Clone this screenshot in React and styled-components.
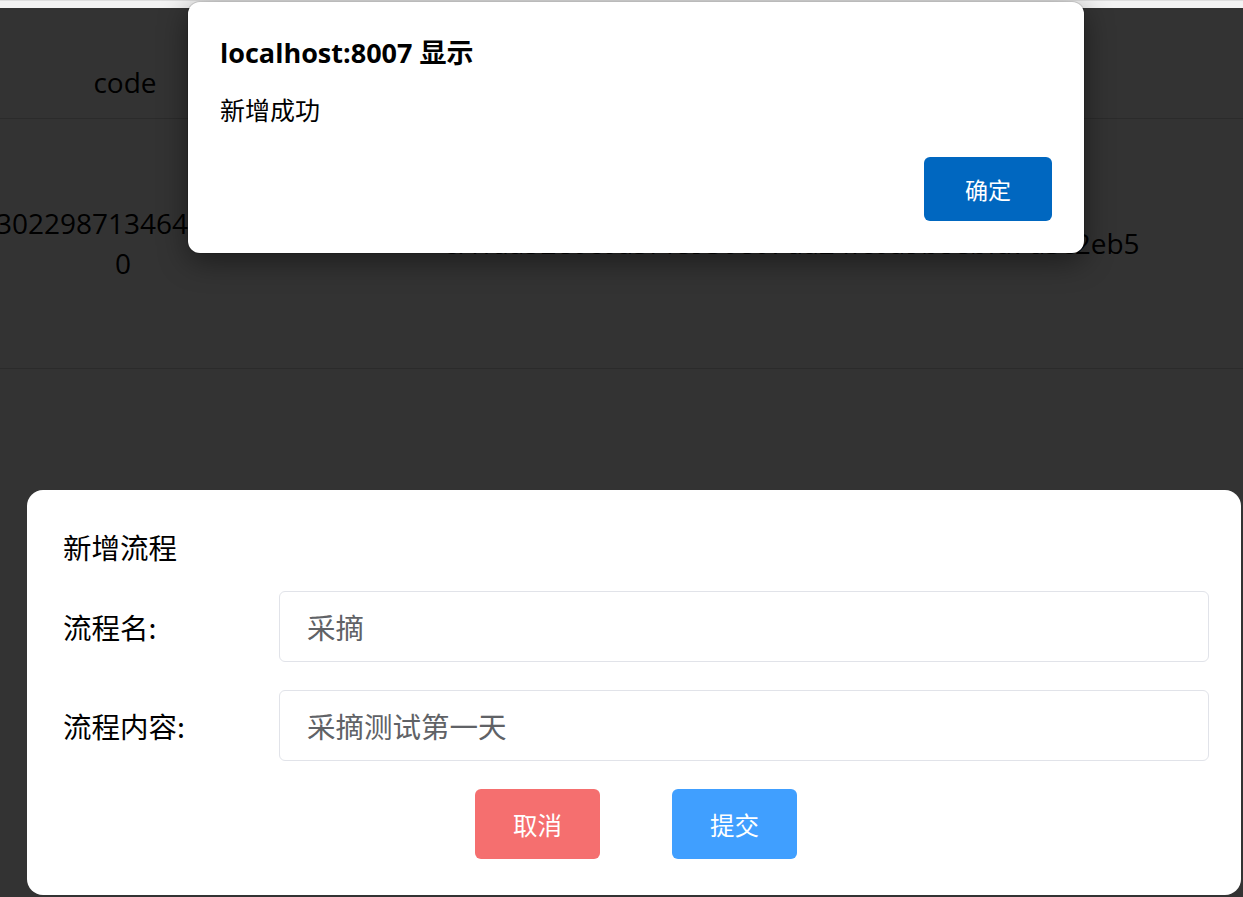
import styled, { createGlobalStyle } from 'styled-components';

const GlobalStyle = createGlobalStyle`
  html, body {
    margin: 0;
    padding: 0;
    height: 100%;
    overflow: hidden;
  }
  body {
    font-family: "Open Sans", "Noto Sans CJK SC", sans-serif;
    background: #ffffff;
  }
  #root {
    height: 100%;
  }
`;

const Screen = styled.div`
  display: flex;
  flex-direction: column;
  height: 100vh;
  position: relative;
`;

const TopStrip = styled.div`
  height: 8px;
  flex-shrink: 0;
  background: #f3f3f3;
  border-top: 1px solid #dedede;
  box-sizing: border-box;
`;

const Viewport = styled.div`
  position: relative;
  flex: 1;
  overflow: hidden;
  background: #ffffff;
`;

const Table = styled.table`
  width: 100%;
  border-collapse: collapse;
  table-layout: fixed;
  font-family: "Open Sans", "Noto Sans CJK SC", sans-serif;
  font-size: 28px;
  color: #000000;
`;

const HeadCell = styled.th`
  height: 110px;
  box-sizing: border-box;
  font-weight: 400;
  text-align: center;
  vertical-align: top;
  border-bottom: 1px solid #d4d4d4;
  padding: 54px 0 0 0;
  line-height: 40px;
`;

const Cell = styled.td`
  height: 249px;
  text-align: center;
  vertical-align: middle;
  border-bottom: 1px solid #d4d4d4;
  line-height: 40px;
  padding: 0;
  white-space: ${p => (p.$nowrap ? 'nowrap' : 'normal')};
`;

const CodeLine = styled.div`
  text-align: ${p => (p.$first ? 'left' : 'center')};
  margin-left: ${p => (p.$first ? '-4px' : '0')};
  width: 246px;
  white-space: nowrap;
`;

const Overlay = styled.div`
  position: absolute;
  inset: 0;
  background: rgba(0, 0, 0, 0.8);
  display: flex;
  flex-direction: column;
  justify-content: flex-end;
  padding: 0 2px 2px 27px;
`;

const FormModal = styled.div`
  background: #ffffff;
  border-radius: 16px;
  height: 405px;
  box-sizing: border-box;
  padding: 36px 32px 36px 36px;
  display: flex;
  flex-direction: column;
  font-family: "Noto Sans CJK SC", "Open Sans", sans-serif;
  color: #000000;
`;

const FormTitle = styled.div`
  font-size: 28.5px;
  line-height: 42px;
  margin-bottom: 23px;
`;

const FormRow = styled.div`
  display: grid;
  grid-template-columns: 216px 1fr;
  align-items: center;
  margin-bottom: 28px;
`;

const Label = styled.label`
  font-size: 28.5px;
  line-height: 40px;
`;

const Field = styled.div`
  height: 71px;
  box-sizing: border-box;
  border: 1px solid #e1e3e9;
  border-radius: 6px;
  display: flex;
  align-items: center;
  padding-left: 27px;
  font-size: 28.5px;
  color: #606266;
`;

const Actions = styled.div`
  display: flex;
  justify-content: center;
  gap: 72px;
`;

const ActionButton = styled.button`
  width: 125px;
  height: 70px;
  border: none;
  border-radius: 6px;
  background: ${p => p.$bg};
  color: #ffffff;
  font-family: "Noto Sans CJK SC", sans-serif;
  font-size: 24.5px;
  padding: 0;
`;

const Alert = styled.div`
  position: absolute;
  top: 2px;
  left: 188px;
  width: 896px;
  height: 251px;
  box-sizing: border-box;
  background: #ffffff;
  border-radius: 12px;
  box-shadow: 0 8px 30px rgba(0, 0, 0, 0.45), 0 0 0 1px rgba(0, 0, 0, 0.12);
  padding: 33px 32px 32px 32px;
  display: flex;
  flex-direction: column;
  font-family: "Open Sans", "Noto Sans CJK SC", sans-serif;
  color: #000000;
`;

const AlertTitle = styled.div`
  font-size: 27px;
  font-weight: 700;
  line-height: 36px;
`;

const AlertMessage = styled.div`
  font-family: "Noto Sans CJK SC", sans-serif;
  font-size: 25px;
  line-height: 34px;
  margin-top: 21px;
`;

const AlertFooter = styled.div`
  margin-top: auto;
  display: flex;
  justify-content: flex-end;
`;

const OkButton = styled.button`
  width: 128px;
  height: 64px;
  border: none;
  border-radius: 6px;
  background: #0067c0;
  color: #ffffff;
  font-family: "Noto Sans CJK SC", sans-serif;
  font-size: 23px;
  padding: 0;
`;

const App = () => {
  return (
    <>
      <GlobalStyle />
      <Screen>
        <TopStrip />
        <Viewport>
          <Table>
            <colgroup>
              <col style={{ width: '250px' }} />
              <col style={{ width: '180px' }} />
              <col />
              <col style={{ width: '90px' }} />
            </colgroup>
            <thead>
              <tr>
                <HeadCell>code</HeadCell>
                <HeadCell>name</HeadCell>
                <HeadCell>hash</HeadCell>
                <HeadCell />
              </tr>
            </thead>
            <tbody>
              <tr>
                <Cell>
                  <CodeLine $first>302298713464</CodeLine>
                  <CodeLine>0</CodeLine>
                </Cell>
                <Cell />
                <Cell $nowrap>cf1fda52e0c0a5f4e930e07da24fc0a9b8ebfa7d3c2eb5</Cell>
                <Cell />
              </tr>
            </tbody>
          </Table>

          <Overlay>
            <FormModal>
              <FormTitle>新增流程</FormTitle>
              <FormRow>
                <Label>流程名:</Label>
                <Field>采摘</Field>
              </FormRow>
              <FormRow>
                <Label>流程内容:</Label>
                <Field>采摘测试第一天</Field>
              </FormRow>
              <Actions>
                <ActionButton $bg="#f56f6f">取消</ActionButton>
                <ActionButton $bg="#409fff">提交</ActionButton>
              </Actions>
            </FormModal>
          </Overlay>
        </Viewport>

        <Alert>
          <AlertTitle>localhost:8007 显示</AlertTitle>
          <AlertMessage>新增成功</AlertMessage>
          <AlertFooter>
            <OkButton>确定</OkButton>
          </AlertFooter>
        </Alert>
      </Screen>
    </>
  );
};

export default App;
